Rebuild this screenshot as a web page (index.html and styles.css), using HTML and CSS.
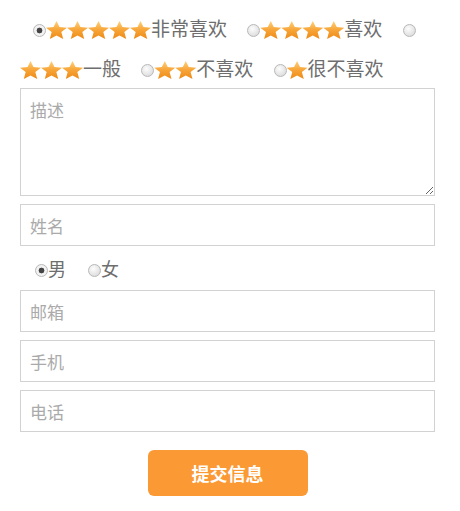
FILE: index.html
```
<!DOCTYPE html>
<html lang="zh-CN">
  <head>
    <meta charset="UTF-8" />
    <meta name="viewport" content="width=device-width, initial-scale=1.0" />
    <title>评价</title>
    <link rel="stylesheet" href="styles.css">
  </head>
  <body>
    <form class="form">
      <!-- 评分 -->
      <div class="rating">
        <label class="opt"><input type="radio" name="rate" checked><span class="star"></span><span class="star"></span><span class="star"></span><span class="star"></span><span class="star"></span>非常喜欢</label>
        <label class="opt"><input type="radio" name="rate"><span class="star"></span><span class="star"></span><span class="star"></span><span class="star"></span>喜欢</label>
        <label class="opt"><input type="radio" name="rate"><span class="star"></span><span class="star"></span><span class="star"></span>一般</label>
        <label class="opt"><input type="radio" name="rate"><span class="star"></span><span class="star"></span>不喜欢</label>
        <label class="opt"><input type="radio" name="rate"><span class="star"></span>很不喜欢</label>
      </div>

      <textarea class="field area" placeholder="描述"></textarea>
      <input class="field" type="text" placeholder="姓名">

      <div class="gender">
        <label class="opt"><input type="radio" name="sex" checked>男</label>
        <label class="opt"><input type="radio" name="sex">女</label>
      </div>

      <input class="field" type="text" placeholder="邮箱">
      <input class="field" type="text" placeholder="手机">
      <input class="field" type="text" placeholder="电话">

      <div class="actions">
        <button type="button" class="submit">提交信息</button>
      </div>
    </form>
  </body>
</html>
```

FILE: styles.css
```
body {
  margin: 0;
  padding: 0;
  background: #fff;
  font-family: "Noto Sans CJK SC", "Liberation Sans", sans-serif;
  color: #6e6e6e;
}

.form {
  padding: 8px 25px 0 20px;
}

.rating {
  font-size: 19px;
  line-height: 40px;
  text-indent: 8px;
}

.opt {
  margin-right: 11px;
}

.opt input {
  appearance: none;
  -webkit-appearance: none;
  box-sizing: border-box;
  width: 13px;
  height: 13px;
  margin: 0 0 0 5px;
  border: 1px solid #b8b8b8;
  border-radius: 50%;
  background: radial-gradient(circle at 40% 35%, #fdfdfd, #d4d4d4);
  vertical-align: -1px;
  text-indent: 0;
}

.opt input:checked {
  background: radial-gradient(circle, #444 0 2.6px, #f2f2f2 3.2px);
}

.star {
  display: inline-block;
  width: 21px;
  height: 18px;
  vertical-align: -3px;
  background: linear-gradient(#ffd27a, #f7a437 50%, #ee8a16);
  clip-path: polygon(50% 0%, 64% 33%, 100% 37%, 73% 61%, 82% 100%, 50% 80%, 18% 100%, 27% 61%, 0% 37%, 36% 33%);
}

.field {
  display: block;
  box-sizing: border-box;
  width: 100%;
  height: 42px;
  margin: 0 0 8px;
  padding: 0 9px;
  border: 1px solid #d2d2d2;
  font-family: inherit;
  font-size: 17px;
  color: #555;
  outline: none;
}

.field::placeholder {
  color: #aaa;
}

.area {
  height: 108px;
  padding: 8px 9px;
}

.gender {
  font-size: 18px;
  line-height: 44px;
  margin: -8px 0 0;
  padding-left: 10px;
}

.gender .opt {
  margin-right: 13px;
}

.actions {
  text-align: center;
  padding-top: 10px;
}

.submit {
  width: 160px;
  height: 46px;
  border: none;
  border-radius: 6px;
  background: #fb9934;
  color: #fff;
  font-family: inherit;
  font-size: 18px;
  font-weight: bold;
  cursor: pointer;
}
```
